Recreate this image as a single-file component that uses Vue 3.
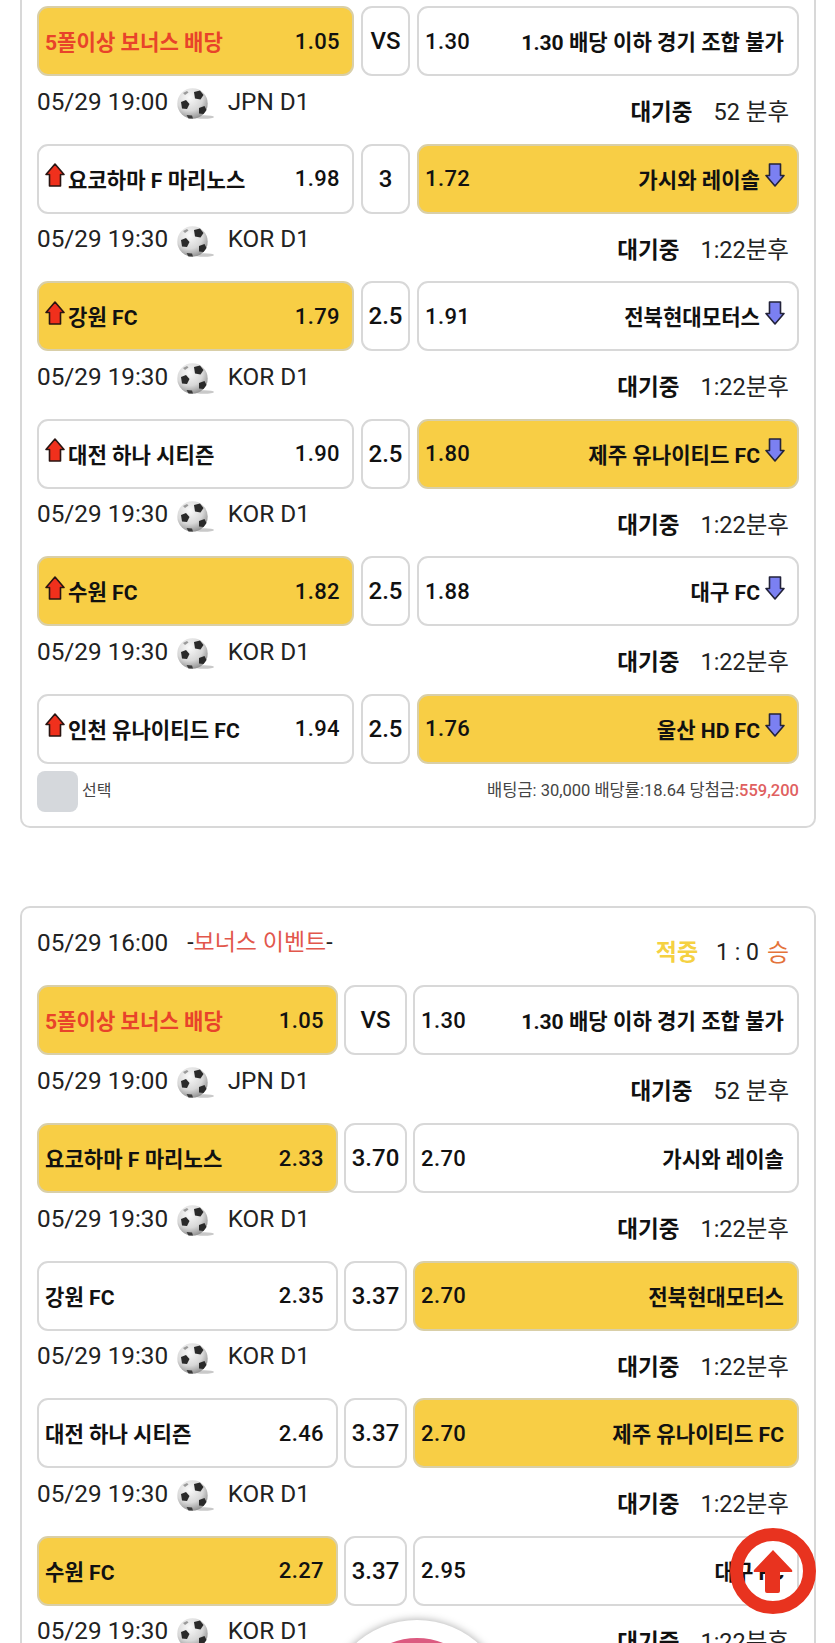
<template>
  <div class="page">
    <div v-for="card in cards" :key="card.id" class="card" :class="card.id">
      <div v-if="card.header" class="card-header">
        <div class="header-left">
          <span class="time">{{ card.header.time }}</span>
          <span class="event">-<em>{{ card.header.event }}</em>-</span>
        </div>
        <div class="header-right">
          <b class="hit">{{ card.header.status }}</b>
          <span class="score">{{ card.header.score }}</span>
          <span class="win">{{ card.header.result }}</span>
        </div>
      </div>

      <template v-for="(row, index) in card.rows" :key="index">
        <div class="odds-row">
          <div class="box box-left" :class="{ active: row.pick === 'home' }">
            <span class="team" :class="{ bonus: row.bonus }">
              <svg v-if="card.arrows && !row.bonus" class="arrow" width="20" height="24" viewBox="0 0 20 24">
                <path d="M10 1 L19 11.5 L15.5 11.5 L15.5 23 L4.5 23 L4.5 11.5 L1 11.5 Z" fill="#f0301c" stroke="#2a1512" stroke-width="1.6" stroke-linejoin="round" />
              </svg>
              {{ row.home }}
            </span>
            <span class="odd">{{ row.homeOdd }}</span>
          </div>
          <div class="box box-mid">{{ row.mid }}</div>
          <div class="box box-right" :class="{ active: row.pick === 'away' }">
            <span class="odd">{{ row.awayOdd }}</span>
            <span class="team">
              {{ row.away }}
              <svg v-if="card.arrows && !row.bonus" class="arrow" width="20" height="24" viewBox="0 0 20 24">
                <path d="M4.5 1 L15.5 1 L15.5 12.5 L19 12.5 L10 23 L1 12.5 L4.5 12.5 Z" fill="#7b80f2" stroke="#23233a" stroke-width="1.6" stroke-linejoin="round" />
              </svg>
            </span>
          </div>
        </div>
        <div v-if="row.time" class="meta">
          <div class="meta-left">
            <span class="time">{{ row.time }}</span>
            <svg class="ball" width="38" height="32" viewBox="0 0 38 32">
              <ellipse cx="27" cy="29" rx="10" ry="1.8" fill="#c9c9c9" />
              <circle cx="15.5" cy="15.5" r="15.2" :fill="`url(#ball-${card.id}-${index})`" />
              <defs>
                <radialGradient :id="`ball-${card.id}-${index}`" cx="0.4" cy="0.3" r="0.8">
                  <stop offset="0" stop-color="#fafafa" />
                  <stop offset="0.55" stop-color="#d8d8d8" />
                  <stop offset="1" stop-color="#7d7d7d" />
                </radialGradient>
              </defs>
              <path d="M17 4 L23 2.5 L26.5 7 L23.5 11.5 L18 10.5 Z" fill="#2a2a2a" />
              <path d="M4 14 L9 12 L12.5 16 L10 21 L5 20.5 Z" fill="#2a2a2a" />
              <path d="M22 20 L27.5 18 L29.5 22 L26.5 26 L22 25.5 Z" fill="#2a2a2a" />
              <path d="M9.5 27 L15 27.5 L16 30.5 L11.5 30.5 Z" fill="#3a3a3a" />
              <path d="M6 5 L10 3 L11.5 4.5 L8 7 Z" fill="#9a9a9a" />
            </svg>
            <span class="league">{{ row.league }}</span>
          </div>
          <div class="meta-right">
            <b>대기중</b>
            <span>{{ row.wait }}</span>
          </div>
        </div>
      </template>

      <div v-if="card.footer" class="card-footer">
        <div class="select">
          <span class="select-box"></span>
          <span class="select-label">선택</span>
        </div>
        <div class="summary">
          배팅금: 30,000 배당률:18.64 당첨금:<b>559,200</b>
        </div>
      </div>
    </div>

    <div class="dock-button"><span></span></div>
    <div class="to-top">
      <svg width="40" height="44" viewBox="0 0 40 44">
        <path d="M20 1 L39 21 Q40 23 38 23 L27 23 L27 42 Q27 44 25 44 L14 44 Q12 44 12 42 L12 23 L2 23 Q0 23 1 21 Z" fill="#e8331f" />
      </svg>
    </div>
  </div>
</template>

<script setup>
const wait = '1:22분후'
const kor = { time: '05/29 19:30', league: 'KOR D1', wait }
const bonusRow = {
  bonus: true,
  pick: 'home',
  home: '5폴이상 보너스 배당',
  homeOdd: '1.05',
  mid: 'VS',
  awayOdd: '1.30',
  away: '1.30 배당 이하 경기 조합 불가',
  time: '05/29 19:00',
  league: 'JPN D1',
  wait: '52 분후'
}

const cards = [
  {
    id: 'first',
    arrows: true,
    footer: true,
    rows: [
      bonusRow,
      { pick: 'away', home: '요코하마 F 마리노스', homeOdd: '1.98', mid: '3', awayOdd: '1.72', away: '가시와 레이솔', ...kor },
      { pick: 'home', home: '강원 FC', homeOdd: '1.79', mid: '2.5', awayOdd: '1.91', away: '전북현대모터스', ...kor },
      { pick: 'away', home: '대전 하나 시티즌', homeOdd: '1.90', mid: '2.5', awayOdd: '1.80', away: '제주 유나이티드 FC', ...kor },
      { pick: 'home', home: '수원 FC', homeOdd: '1.82', mid: '2.5', awayOdd: '1.88', away: '대구 FC', ...kor },
      { pick: 'away', home: '인천 유나이티드 FC', homeOdd: '1.94', mid: '2.5', awayOdd: '1.76', away: '울산 HD FC' }
    ]
  },
  {
    id: 'second',
    header: { time: '05/29 16:00', event: '보너스 이벤트', status: '적중', score: '1 : 0', result: '승' },
    rows: [
      bonusRow,
      { pick: 'home', home: '요코하마 F 마리노스', homeOdd: '2.33', mid: '3.70', awayOdd: '2.70', away: '가시와 레이솔', ...kor },
      { pick: 'away', home: '강원 FC', homeOdd: '2.35', mid: '3.37', awayOdd: '2.70', away: '전북현대모터스', ...kor },
      { pick: 'away', home: '대전 하나 시티즌', homeOdd: '2.46', mid: '3.37', awayOdd: '2.70', away: '제주 유나이티드 FC', ...kor },
      { pick: 'home', home: '수원 FC', homeOdd: '2.27', mid: '3.37', awayOdd: '2.95', away: '대구 FC', ...kor }
    ]
  }
]
</script>

<style>
html,
body {
  background: #fff;
  overflow: hidden;
}
</style>

<style scoped>
.page {
  padding: 0 19px 0 20px;
  font-family: Roboto, "Noto Sans CJK KR", sans-serif;
  color: #222;
}

.card {
  border: 2px solid #d8d8d8;
  border-radius: 10px;
  padding: 0 15px 14px;
  background: #fff;
}

.card.first {
  border-top: none;
  border-radius: 0 0 10px 10px;
  padding-top: 6px;
  margin-bottom: 78.5px;
}

.card-header {
  height: 77px;
  display: flex;
  justify-content: space-between;
  align-items: flex-start;
  padding-right: 10px;
  font-size: 24.3px;
}

.header-left {
  display: flex;
  align-items: center;
  gap: 19px;
  line-height: 34px;
  margin-top: 18px;
}

.event {
  font-size: 23px;
}

.event em {
  font-style: normal;
  color: #e2574c;
}

.header-right {
  display: flex;
  line-height: 34px;
  margin-top: 28px;
}

.hit {
  color: #f5d142;
  font-size: 23px;
  margin-right: 18px;
}

.score {
  margin-right: 8px;
  font-size: 23px;
}

.win {
  color: #e4733a;
  font-size: 24px;
}

.odds-row {
  display: grid;
  height: 70px;
}

.first .odds-row {
  grid-template-columns: 317px 49px 1fr;
  column-gap: 7px;
}

.second .odds-row {
  grid-template-columns: 301px 63px 1fr;
  column-gap: 6px;
}

.box {
  border: 2px solid #d8d8d8;
  border-radius: 11px;
  background: #fff;
  display: flex;
  align-items: center;
  font-size: 22px;
  font-weight: 500;
  color: #111;
  min-width: 0;
}

.box.active {
  background: #f8ce45;
  border-color: #d9cfa8;
}

.box-left,
.box-right {
  justify-content: space-between;
  padding: 0 12px 0 6px;
}

.box-right {
  padding-right: 13px;
}

.box-mid {
  justify-content: center;
  font-size: 24px;
}

.team {
  display: inline-flex;
  align-items: center;
  gap: 3px;
  font-size: 21.1px;
  font-weight: 700;
  white-space: nowrap;
}

.team.bonus {
  color: #e8432a;
}

.odd {
  letter-spacing: 0.4px;
}

.arrow {
  margin-bottom: 7px;
  flex-shrink: 0;
}

.box-right .arrow {
  margin-left: 2px;
  margin-right: -1px;
}

.meta {
  height: 67.6px;
  display: flex;
  justify-content: space-between;
  align-items: flex-start;
  padding-right: 10px;
  font-size: 24.3px;
}

.meta-left {
  display: flex;
  align-items: center;
  height: 50px;
}

.ball {
  margin: 6px 13px 0 8.5px;
}

.meta-right {
  display: flex;
  gap: 21px;
  margin-top: 12px;
  line-height: 48px;
  font-size: 23.5px;
}

.meta-right b {
  font-size: 22.5px;
  color: #111;
}

.card-footer {
  display: flex;
  justify-content: space-between;
  align-items: center;
  margin-top: 7px;
  font-size: 16.5px;
  color: #444;
}

.select {
  display: flex;
  align-items: center;
  gap: 4px;
}

.select-box {
  width: 41px;
  height: 41px;
  border-radius: 8px;
  background: #d5d8dc;
}

.select-label,
.summary {
  margin-bottom: 4px;
}

.select-label {
  font-size: 16px;
}

.summary b {
  color: #e06060;
  font-weight: 500;
}

.to-top {
  position: fixed;
  left: 730px;
  top: 1528px;
  width: 86px;
  height: 86px;
  box-sizing: border-box;
  border: 13px solid #e8331f;
  border-radius: 50%;
  display: flex;
  align-items: center;
  justify-content: center;
}

.dock-button {
  position: fixed;
  left: 325px;
  top: 1620px;
  width: 184px;
  height: 184px;
  border-radius: 50%;
  background: #fff;
  box-shadow: 0 0 8px rgba(0, 0, 0, 0.35);
  display: flex;
  justify-content: center;
}

.dock-button span {
  width: 140px;
  height: 140px;
  margin-top: 18px;
  border-radius: 50%;
  background: #dc5a80;
}
</style>
